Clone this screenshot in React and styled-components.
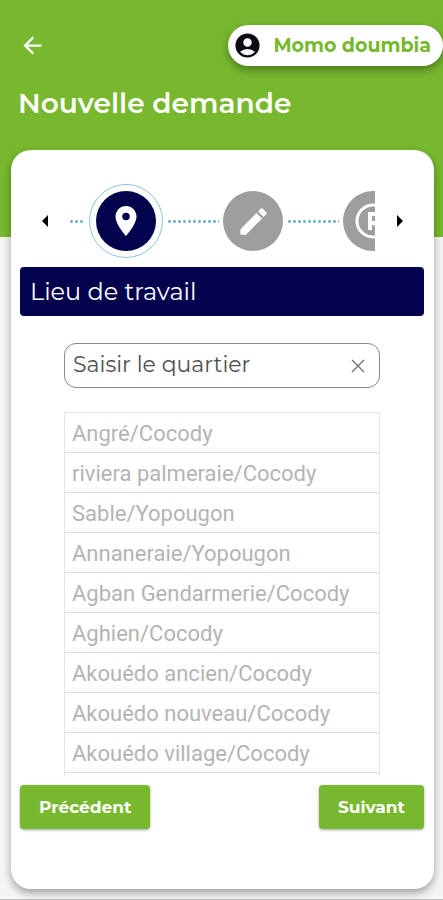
import React, { useState } from "react";
import styled, { createGlobalStyle } from "styled-components";
import {
  MdAccountCircle,
  MdArrowBack,
  MdEdit,
  MdLocationOn,
} from "react-icons/md";

const colors = {
  green: "#77b82e",
  navy: "#02024d",
  gray: "#9e9e9e",
  blue: "#8cc3dc",
  white: "#ffffff",
};

const districts = [
  "Angré/Cocody",
  "riviera palmeraie/Cocody",
  "Sable/Yopougon",
  "Annaneraie/Yopougon",
  "Agban Gendarmerie/Cocody",
  "Aghien/Cocody",
  "Akouédo ancien/Cocody",
  "Akouédo nouveau/Cocody",
  "Akouédo village/Cocody",
];

const GlobalStyle = createGlobalStyle`
  * {
    box-sizing: border-box;
  }

  body {
    margin: 0;
    background: #f5f5f5;
    font-family: Montserrat, Inter, sans-serif;
  }

  button,
  input {
    font-family: inherit;
  }
`;

const Page = styled.div`
  min-height: 100vh;
  border-bottom: 1px solid #bdbdbd;
`;

const Header = styled.header`
  padding: 25px 0 87px;
  background: ${colors.green};
`;

const TopBar = styled.div`
  display: flex;
  align-items: center;
  justify-content: space-between;
  height: 41px;
  padding-left: 19px;
`;

const BackButton = styled.button`
  display: flex;
  padding: 0;
  border: none;
  background: none;
  color: ${colors.white};
  cursor: pointer;
`;

const UserButton = styled.button`
  display: flex;
  align-items: center;
  gap: 11px;
  height: 41px;
  padding: 0 12px 0 5px;
  border: none;
  border-radius: 21px;
  background: ${colors.white};
  box-shadow: 0 4px 8px rgba(0, 0, 0, 0.35);
  color: ${colors.green};
  font-size: 19px;
  font-weight: 700;
  cursor: pointer;

  svg {
    color: #0c0c14;
  }
`;

const Title = styled.h1`
  margin: 0;
  padding: 17px 18px 27px;
  color: ${colors.white};
  font-size: 28px;
  font-weight: 600;
  line-height: 40px;
`;

const Card = styled.main`
  margin: -87px 9px 10px 11px;
  padding: 34px 10px 60px 9px;
  border-radius: 20px;
  background: ${colors.white};
  box-shadow: 0 4px 9px rgba(0, 0, 0, 0.35);
`;

const Stepper = styled.nav`
  display: flex;
  align-items: center;
`;

const StepperArrow = styled.button`
  display: flex;
  flex: none;
  justify-content: center;
  width: 49px;
  padding: 16px 0;
  border: none;
  background: none;
  color: #000;
  cursor: pointer;
`;

const Steps = styled.div`
  display: flex;
  flex: 1;
  align-items: center;
  min-width: 0;
  overflow: hidden;
`;

const StepRing = styled.div`
  flex: none;
  padding: ${({ $active }) => ($active ? "6px" : "0")};
  border: ${({ $active }) => ($active ? `1px solid ${colors.blue}` : "none")};
  border-radius: 50%;
`;

const StepButton = styled.button`
  display: flex;
  align-items: center;
  justify-content: center;
  width: 60px;
  height: 60px;
  padding: 0;
  border: none;
  border-radius: 50%;
  background: ${({ $active }) => ($active ? colors.navy : colors.gray)};
  color: ${colors.white};
  cursor: pointer;
`;

const Dots = styled.span`
  flex: none;
  width: ${({ $short }) => ($short ? "16px" : "52px")};
  height: 5px;
  margin: 0 4px;
  background: radial-gradient(circle, #6fb3d2 1px, transparent 2px) 0 0 / 5px
    5px;

  &:first-child {
    margin-left: 0;
  }
`;

const SectionTitle = styled.h2`
  margin: 9px 0 27px;
  padding: 0 10px;
  border-radius: 4px;
  background: ${colors.navy};
  color: ${colors.white};
  font-size: 24px;
  font-weight: 400;
  line-height: 49px;
`;

const Picker = styled.div`
  margin: 0 44px 9px;
`;

const SearchBox = styled.div`
  display: flex;
  align-items: center;
  height: 45px;
  padding: 0 13px 0 8px;
  border: 1px solid #8a8a8a;
  border-radius: 12px;
`;

const SearchInput = styled.input`
  flex: 1;
  min-width: 0;
  padding: 0 0 3px;
  border: none;
  outline: none;
  background: none;
  color: #505050;
  font-size: 22px;

  &::placeholder {
    color: #505050;
    opacity: 1;
  }
`;

const ClearButton = styled.button`
  display: flex;
  padding: 0;
  border: none;
  background: none;
  color: #757575;
  cursor: pointer;
`;

const DistrictList = styled.ul`
  height: 364px;
  margin: 24px 0 0;
  padding: 0;
  border: 1px solid #e4e4e4;
  border-bottom: none;
  overflow-y: auto;
  list-style: none;
  scrollbar-width: none;
`;

const DistrictButton = styled.button`
  display: block;
  width: 100%;
  height: 40px;
  padding: 2px 7px 0;
  border: none;
  border-bottom: 1px solid #dcdcdc;
  background: none;
  color: #b4b4b4;
  font-family: Roboto, sans-serif;
  font-size: 22px;
  text-align: left;
  white-space: nowrap;
  cursor: pointer;
`;

const Actions = styled.div`
  display: flex;
  justify-content: space-between;
`;

const ActionButton = styled.button`
  height: 44px;
  padding: 0 19px;
  border: none;
  border-radius: 4px;
  background: ${colors.green};
  box-shadow: 0 1px 3px rgba(0, 0, 0, 0.35);
  color: ${colors.white};
  font-size: 17px;
  font-weight: 700;
  cursor: pointer;
`;

const Triangle = ({ points }) => (
  <svg width="6" height="12" viewBox="0 0 6 12">
    <polygon points={points} fill="currentColor" />
  </svg>
);

const CloseIcon = () => (
  <svg width="16" height="16" viewBox="0 0 16 16" stroke="currentColor">
    <path d="M2 2 14 14M14 2 2 14" strokeWidth="1.4" fill="none" />
  </svg>
);

const RegisteredIcon = () => (
  <svg width="36" height="36" viewBox="0 0 36 36" stroke="currentColor">
    <circle cx="18" cy="18" r="16" strokeWidth="3" fill="none" />
    <path
      d="M15 27V11h5a4.5 4.5 0 0 1 0 9h-5M20 20l4 7"
      strokeWidth="4"
      fill="none"
    />
  </svg>
);

export default function App() {
  const [step, setStep] = useState(0);
  const [search, setSearch] = useState("");

  const steps = [
    { name: "Lieu de travail", icon: <MdLocationOn size={36} /> },
    { name: "Description", icon: <MdEdit size={35} /> },
    { name: "Récapitulatif", icon: <RegisteredIcon /> },
  ];

  const previous = () => setStep(Math.max(step - 1, 0));
  const next = () => setStep(Math.min(step + 1, steps.length - 1));

  return (
    <>
      <GlobalStyle />
      <Page>
        <Header>
          <TopBar>
            <BackButton aria-label="Retour">
              <MdArrowBack size={27} />
            </BackButton>
            <UserButton>
              <MdAccountCircle size={29} />
              Momo doumbia
            </UserButton>
          </TopBar>
          <Title>Nouvelle demande</Title>
        </Header>
        <Card>
          <Stepper>
            <StepperArrow aria-label="Étape précédente" onClick={previous}>
              <Triangle points="6,0 6,12 0,6" />
            </StepperArrow>
            <Steps>
              {steps.map((item, index) => (
                <React.Fragment key={item.name}>
                  <Dots $short={index === 0} />
                  <StepRing $active={index === step}>
                    <StepButton
                      $active={index === step}
                      aria-label={item.name}
                      onClick={() => setStep(index)}
                    >
                      {item.icon}
                    </StepButton>
                  </StepRing>
                </React.Fragment>
              ))}
            </Steps>
            <StepperArrow aria-label="Étape suivante" onClick={next}>
              <Triangle points="0,0 0,12 6,6" />
            </StepperArrow>
          </Stepper>
          <SectionTitle>{steps[step].name}</SectionTitle>
          <Picker>
            <SearchBox>
              <SearchInput
                aria-label="Saisir le quartier"
                placeholder="Saisir le quartier"
                value={search}
                onChange={(e) => setSearch(e.target.value)}
              />
              <ClearButton aria-label="Effacer" onClick={() => setSearch("")}>
                <CloseIcon />
              </ClearButton>
            </SearchBox>
            <DistrictList>
              {districts
                .filter((name) =>
                  name.toLowerCase().includes(search.toLowerCase())
                )
                .map((name) => (
                  <li key={name}>
                    <DistrictButton onClick={() => setSearch(name)}>
                      {name}
                    </DistrictButton>
                  </li>
                ))}
            </DistrictList>
          </Picker>
          <Actions>
            <ActionButton onClick={previous}>Précédent</ActionButton>
            <ActionButton onClick={next}>Suivant</ActionButton>
          </Actions>
        </Card>
      </Page>
    </>
  );
}
